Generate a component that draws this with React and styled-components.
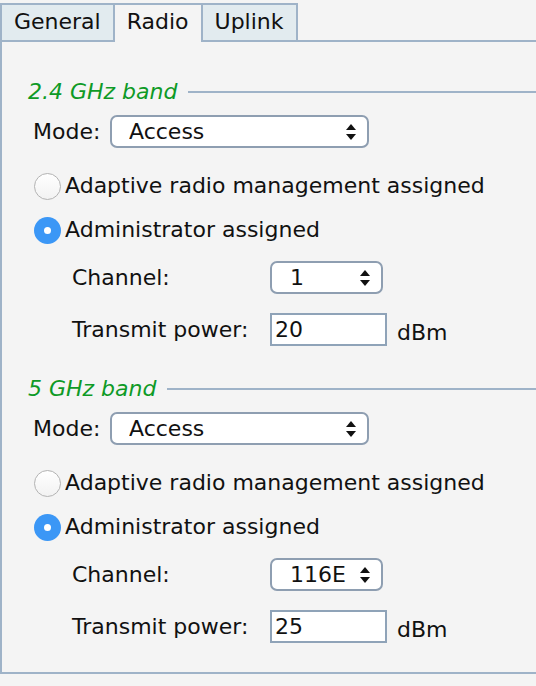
import React from "react";
import styled, { createGlobalStyle } from "styled-components";

const GlobalStyle = createGlobalStyle`
  html, body {
    margin: 0;
    padding: 0;
    background: #f4f4f4;
    overflow: hidden;
  }
  body {
    font-family: "DejaVu Sans", Verdana, sans-serif;
    font-size: 22px;
    line-height: 26px;
    color: #111;
  }
`;

const Page = styled.div`
  width: 536px;
  height: 686px;
  padding-top: 3px;
  box-sizing: border-box;
`;

const TabBar = styled.div`
  display: flex;
  height: 37px;
`;

const Tab = styled.div`
  box-sizing: border-box;
  padding: 4px 12px 0 12px;
  border: 2px solid #9fb3c8;
  border-bottom: none;
  margin-left: ${(p) => (p.first ? "0" : "-2px")};
  background: ${(p) => (p.active ? "#f4f4f4" : "#e2ebef")};
  position: relative;
  z-index: ${(p) => (p.active ? 2 : 1)};
  height: ${(p) => (p.active ? "39px" : "37px")};
  white-space: nowrap;
`;

const Panel = styled.div`
  width: 536px;
  height: 634px;
  box-sizing: border-box;
  border: 2px solid #9fb3c8;
  border-right: none;
  background: #f4f4f4;
  padding-top: 38px;
  overflow: hidden;
`;

const Band = styled.section`
  display: flex;
  flex-direction: column;
  margin-bottom: ${(p) => p.gapAfter || 0}px;
`;

const LegendRow = styled.div`
  display: flex;
  align-items: center;
  height: 24px;
  padding-left: 26px;
`;

const LegendText = styled.span`
  font-style: italic;
  color: #0e9a26;
  white-space: nowrap;
`;

const LegendLine = styled.span`
  flex: 1;
  height: 2px;
  background: #9fb3c8;
  margin-left: 11px;
`;

const Row = styled.div`
  display: flex;
  align-items: center;
  height: ${(p) => p.h || 33}px;
  margin-top: ${(p) => p.mt || 0}px;
  padding-left: ${(p) => p.indent || 31}px;
`;

const Label = styled.span`
  flex: none;
  width: ${(p) => (p.w ? p.w + "px" : "auto")};
  white-space: nowrap;
`;

const SelectBox = styled.div`
  display: flex;
  align-items: center;
  width: ${(p) => p.w}px;
  height: 33px;
  box-sizing: border-box;
  border: 2px solid #8e9eb1;
  border-radius: 7px;
  background: #fff;
  padding: 0 11px 0 ${(p) => p.pl || 17}px;
`;

const SelectText = styled.span`
  flex: 1;
  overflow: hidden;
  white-space: nowrap;
`;

const Arrows = styled.svg`
  flex: none;
  width: 10px;
  height: 16px;
  margin-left: 3px;
`;

const TextInput = styled.div`
  flex: none;
  width: 117px;
  height: 33px;
  box-sizing: border-box;
  border: 2px solid #8fa3b8;
  background: #fff;
  padding-left: 3px;
  line-height: 29px;
`;

const Unit = styled.span`
  margin-left: 10px;
  padding-top: 6px;
`;

const RadioCircle = styled.span`
  flex: none;
  width: 27px;
  height: 27px;
  border-radius: 50%;
  box-sizing: border-box;
  margin-right: 4px;
  display: flex;
  align-items: center;
  justify-content: center;
  border: ${(p) => (p.checked ? "none" : "1px solid #b3b3b3")};
  background: ${(p) =>
    p.checked ? "#3b97f6" : "linear-gradient(#ffffff, #f2f2f2)"};
  &::after {
    content: "";
    display: ${(p) => (p.checked ? "block" : "none")};
    width: 7px;
    height: 7px;
    border-radius: 50%;
    background: #fff;
  }
`;

const Select = ({ value, w, pl }) => (
  <SelectBox w={w} pl={pl}>
    <SelectText>{value}</SelectText>
    <Arrows viewBox="0 0 10 16">
      <path d="M5 0 L10 6 L0 6 Z" fill="#111" />
      <path d="M0 10 L10 10 L5 16 Z" fill="#111" />
    </Arrows>
  </SelectBox>
);

const Radio = ({ checked, label, mt }) => (
  <Row h={28} mt={mt} indent={32}>
    <RadioCircle checked={checked} />
    <Label>{label}</Label>
  </Row>
);

const BandSettings = ({ title, channel, power, gapAfter }) => (
  <Band gapAfter={gapAfter}>
    <LegendRow>
      <LegendText>{title}</LegendText>
      <LegendLine />
    </LegendRow>
    <Row mt={11}>
      <Label w={77}>Mode:</Label>
      <Select value="Access" w={259} />
    </Row>
    <Radio mt={24} label="Adaptive radio management assigned" />
    <Radio checked mt={16} label="Administrator assigned" />
    <Row mt={17} indent={70}>
      <Label w={198}>Channel:</Label>
      <Select value={channel} w={113} pl={18} />
    </Row>
    <Row mt={19} indent={70}>
      <Label w={198}>Transmit power:</Label>
      <TextInput>{power}</TextInput>
      <Unit>dBm</Unit>
    </Row>
  </Band>
);

const App = () => (
  <Page>
    <GlobalStyle />
    <TabBar>
      <Tab first>General</Tab>
      <Tab active>Radio</Tab>
      <Tab>Uplink</Tab>
    </TabBar>
    <Panel>
      <BandSettings title="2.4 GHz band" channel="1" power="20" gapAfter={31} />
      <BandSettings title="5 GHz band" channel="116E" power="25" />
    </Panel>
  </Page>
);

export default App;
